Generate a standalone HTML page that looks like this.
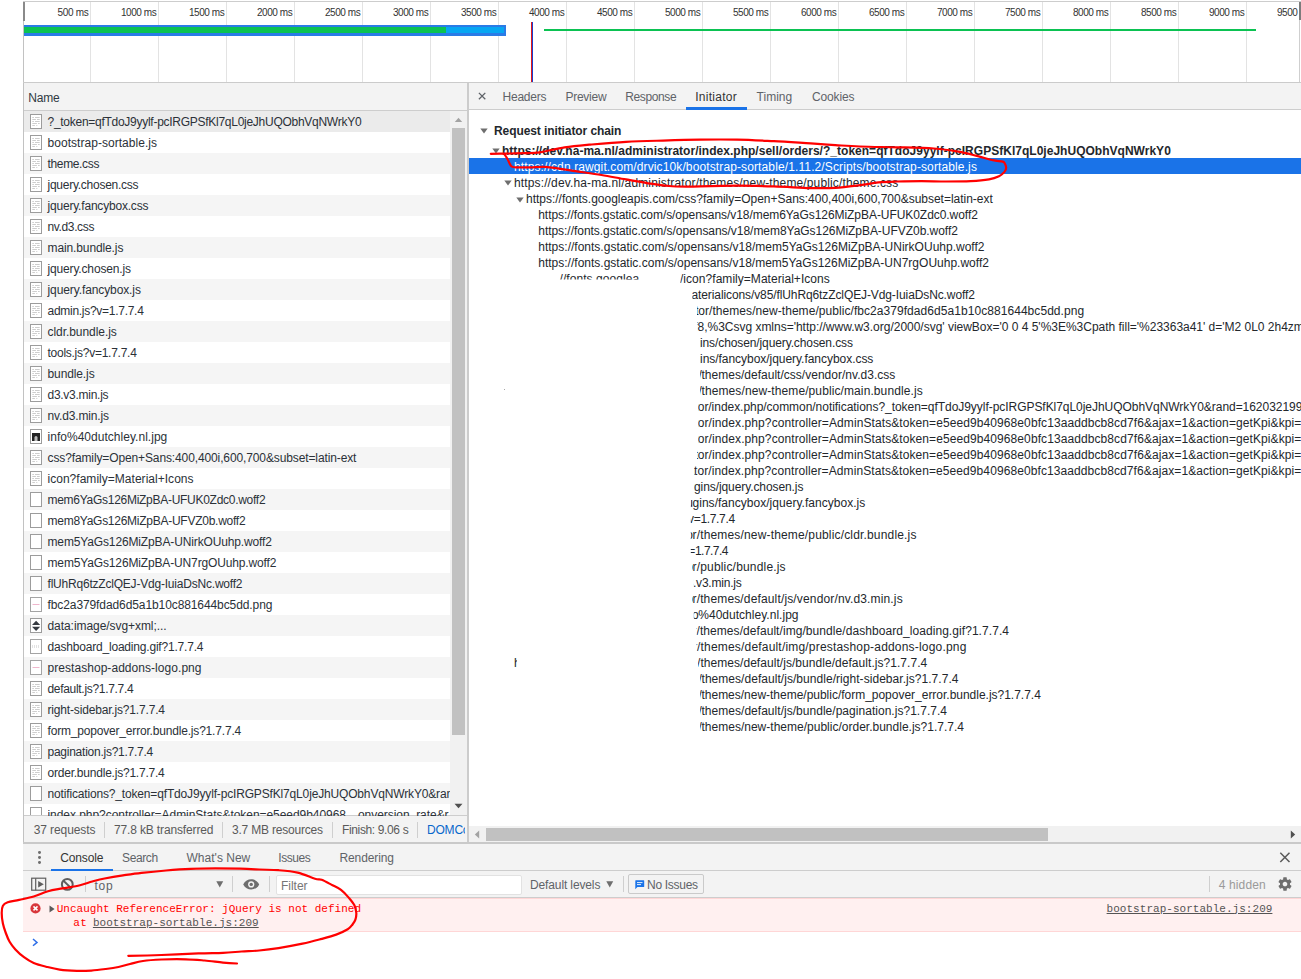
<!DOCTYPE html><html lang="en"><head><meta charset="utf-8"><title>DevTools - Network</title><style>
*{box-sizing:border-box}
html,body{margin:0;padding:0}
body{width:1301px;height:979px;position:relative;overflow:hidden;background:#fff;font-family:"Liberation Sans",sans-serif;font-size:12px;color:#303942}
.a{position:absolute}
.t{position:absolute;white-space:pre;line-height:16px;height:16px;font-size:12px}
.ov{font-size:10px;color:#333}
.hd{color:#303942}
.ln{color:#2b3138}
.sb{color:#5a5a5a}
.dom{color:#0867cb}
.tab{color:#5f6368}
.tab.sel{color:#333}
.tr{color:#23272c}
.b{font-weight:bold}
.w{color:#fff}
.dt{color:#5f6368}
.dt.sel{color:#333}
.ph{color:#757575}
.hid{color:#9a9a9a}
.mono{font-family:"Liberation Mono",monospace;font-size:11px}
.red{color:#ff0000}
.lnk{color:#545454;text-decoration:underline}
</style></head><body>
<div class="a" style="left:23px;top:1px;width:1278px;height:1px;background:#cdcdcd;"></div>
<div class="a" style="left:90px;top:2px;width:1px;height:80px;background:#e3e3e3;"></div>
<div class="a" style="left:158px;top:2px;width:1px;height:80px;background:#e3e3e3;"></div>
<div class="a" style="left:226px;top:2px;width:1px;height:80px;background:#e3e3e3;"></div>
<div class="a" style="left:294px;top:2px;width:1px;height:80px;background:#e3e3e3;"></div>
<div class="a" style="left:362px;top:2px;width:1px;height:80px;background:#e3e3e3;"></div>
<div class="a" style="left:430px;top:2px;width:1px;height:80px;background:#e3e3e3;"></div>
<div class="a" style="left:498px;top:2px;width:1px;height:80px;background:#e3e3e3;"></div>
<div class="a" style="left:566px;top:2px;width:1px;height:80px;background:#e3e3e3;"></div>
<div class="a" style="left:634px;top:2px;width:1px;height:80px;background:#e3e3e3;"></div>
<div class="a" style="left:702px;top:2px;width:1px;height:80px;background:#e3e3e3;"></div>
<div class="a" style="left:770px;top:2px;width:1px;height:80px;background:#e3e3e3;"></div>
<div class="a" style="left:838px;top:2px;width:1px;height:80px;background:#e3e3e3;"></div>
<div class="a" style="left:906px;top:2px;width:1px;height:80px;background:#e3e3e3;"></div>
<div class="a" style="left:974px;top:2px;width:1px;height:80px;background:#e3e3e3;"></div>
<div class="a" style="left:1042px;top:2px;width:1px;height:80px;background:#e3e3e3;"></div>
<div class="a" style="left:1110px;top:2px;width:1px;height:80px;background:#e3e3e3;"></div>
<div class="a" style="left:1178px;top:2px;width:1px;height:80px;background:#e3e3e3;"></div>
<div class="a" style="left:1246px;top:2px;width:1px;height:80px;background:#e3e3e3;"></div>
<div class="a" style="left:23px;top:2px;width:1px;height:841px;background:#c2c2c2;"></div>
<div class="a" style="left:23px;top:2px;width:2px;height:19px;background:#8a8a8a;"></div>
<div class="a" style="left:24px;top:25px;width:481.5px;height:10.8px;background:#2a7be6;"></div>
<div class="a" style="left:24px;top:27.3px;width:479.8px;height:5.6px;background:#06a6f2;"></div>
<div class="a" style="left:24px;top:27.3px;width:421.8px;height:5.6px;background:#0bc252;"></div>
<div class="a" style="left:544px;top:29px;width:712px;height:2px;background:#0bc252;"></div>
<div class="a" style="left:531px;top:22px;width:1px;height:60px;background:#e0181c;"></div>
<div class="a" style="left:532px;top:22px;width:1px;height:60px;background:#1a3fd0;"></div>
<div class="a" style="left:23px;top:82px;width:1278px;height:1px;background:#cbcbcb;"></div>
<div class="a" style="left:24px;top:83px;width:443px;height:27px;background:#f3f3f3;"></div>
<div class="a" style="left:24px;top:110px;width:443px;height:1px;background:#cdcdcd;"></div>
<div class="a" style="left:24px;top:111px;width:426px;height:704px;overflow:hidden">
<div class="a" style="left:0;top:0px;width:426px;height:21px;background:#ebebeb"></div>
<svg class="a" style="left:6px;top:2.7px" width="12" height="15" viewBox="0 0 12 15"><rect x="0.5" y="0.5" width="11" height="14" fill="#fff" stroke="#9c9c9c"/><path d="M2.3 3.5h1.6M5 3.5h4.7M2.3 5.5h3.6M7 5.5h2.7M2.3 7.5h1.6M5 7.5h4.7M2.3 9.5h4.6M8 9.5h1.7M2.3 11.5h2.6M6.3 11.5h1" stroke="#cdcdcd" stroke-width="1" fill="none"/></svg>
<div class="a" style="left:0;top:21px;width:426px;height:21px;background:#fff"></div>
<svg class="a" style="left:6px;top:23.7px" width="12" height="15" viewBox="0 0 12 15"><rect x="0.5" y="0.5" width="11" height="14" fill="#fff" stroke="#9c9c9c"/><path d="M2.3 3.5h1.6M5 3.5h4.7M2.3 5.5h3.6M7 5.5h2.7M2.3 7.5h1.6M5 7.5h4.7M2.3 9.5h4.6M8 9.5h1.7M2.3 11.5h2.6M6.3 11.5h1" stroke="#cdcdcd" stroke-width="1" fill="none"/></svg>
<div class="a" style="left:0;top:42px;width:426px;height:21px;background:#f5f5f5"></div>
<svg class="a" style="left:6px;top:44.7px" width="12" height="15" viewBox="0 0 12 15"><rect x="0.5" y="0.5" width="11" height="14" fill="#fff" stroke="#9c9c9c"/><path d="M2.3 3.5h1.6M5 3.5h4.7M2.3 5.5h3.6M7 5.5h2.7M2.3 7.5h1.6M5 7.5h4.7M2.3 9.5h4.6M8 9.5h1.7M2.3 11.5h2.6M6.3 11.5h1" stroke="#cdcdcd" stroke-width="1" fill="none"/></svg>
<div class="a" style="left:0;top:63px;width:426px;height:21px;background:#fff"></div>
<svg class="a" style="left:6px;top:65.7px" width="12" height="15" viewBox="0 0 12 15"><rect x="0.5" y="0.5" width="11" height="14" fill="#fff" stroke="#9c9c9c"/><path d="M2.3 3.5h1.6M5 3.5h4.7M2.3 5.5h3.6M7 5.5h2.7M2.3 7.5h1.6M5 7.5h4.7M2.3 9.5h4.6M8 9.5h1.7M2.3 11.5h2.6M6.3 11.5h1" stroke="#cdcdcd" stroke-width="1" fill="none"/></svg>
<div class="a" style="left:0;top:84px;width:426px;height:21px;background:#f5f5f5"></div>
<svg class="a" style="left:6px;top:86.7px" width="12" height="15" viewBox="0 0 12 15"><rect x="0.5" y="0.5" width="11" height="14" fill="#fff" stroke="#9c9c9c"/><path d="M2.3 3.5h1.6M5 3.5h4.7M2.3 5.5h3.6M7 5.5h2.7M2.3 7.5h1.6M5 7.5h4.7M2.3 9.5h4.6M8 9.5h1.7M2.3 11.5h2.6M6.3 11.5h1" stroke="#cdcdcd" stroke-width="1" fill="none"/></svg>
<div class="a" style="left:0;top:105px;width:426px;height:21px;background:#fff"></div>
<svg class="a" style="left:6px;top:107.7px" width="12" height="15" viewBox="0 0 12 15"><rect x="0.5" y="0.5" width="11" height="14" fill="#fff" stroke="#9c9c9c"/><path d="M2.3 3.5h1.6M5 3.5h4.7M2.3 5.5h3.6M7 5.5h2.7M2.3 7.5h1.6M5 7.5h4.7M2.3 9.5h4.6M8 9.5h1.7M2.3 11.5h2.6M6.3 11.5h1" stroke="#cdcdcd" stroke-width="1" fill="none"/></svg>
<div class="a" style="left:0;top:126px;width:426px;height:21px;background:#f5f5f5"></div>
<svg class="a" style="left:6px;top:128.7px" width="12" height="15" viewBox="0 0 12 15"><rect x="0.5" y="0.5" width="11" height="14" fill="#fff" stroke="#9c9c9c"/><path d="M2.3 3.5h1.6M5 3.5h4.7M2.3 5.5h3.6M7 5.5h2.7M2.3 7.5h1.6M5 7.5h4.7M2.3 9.5h4.6M8 9.5h1.7M2.3 11.5h2.6M6.3 11.5h1" stroke="#cdcdcd" stroke-width="1" fill="none"/></svg>
<div class="a" style="left:0;top:147px;width:426px;height:21px;background:#fff"></div>
<svg class="a" style="left:6px;top:149.7px" width="12" height="15" viewBox="0 0 12 15"><rect x="0.5" y="0.5" width="11" height="14" fill="#fff" stroke="#9c9c9c"/><path d="M2.3 3.5h1.6M5 3.5h4.7M2.3 5.5h3.6M7 5.5h2.7M2.3 7.5h1.6M5 7.5h4.7M2.3 9.5h4.6M8 9.5h1.7M2.3 11.5h2.6M6.3 11.5h1" stroke="#cdcdcd" stroke-width="1" fill="none"/></svg>
<div class="a" style="left:0;top:168px;width:426px;height:21px;background:#f5f5f5"></div>
<svg class="a" style="left:6px;top:170.7px" width="12" height="15" viewBox="0 0 12 15"><rect x="0.5" y="0.5" width="11" height="14" fill="#fff" stroke="#9c9c9c"/><path d="M2.3 3.5h1.6M5 3.5h4.7M2.3 5.5h3.6M7 5.5h2.7M2.3 7.5h1.6M5 7.5h4.7M2.3 9.5h4.6M8 9.5h1.7M2.3 11.5h2.6M6.3 11.5h1" stroke="#cdcdcd" stroke-width="1" fill="none"/></svg>
<div class="a" style="left:0;top:189px;width:426px;height:21px;background:#fff"></div>
<svg class="a" style="left:6px;top:191.7px" width="12" height="15" viewBox="0 0 12 15"><rect x="0.5" y="0.5" width="11" height="14" fill="#fff" stroke="#9c9c9c"/><path d="M2.3 3.5h1.6M5 3.5h4.7M2.3 5.5h3.6M7 5.5h2.7M2.3 7.5h1.6M5 7.5h4.7M2.3 9.5h4.6M8 9.5h1.7M2.3 11.5h2.6M6.3 11.5h1" stroke="#cdcdcd" stroke-width="1" fill="none"/></svg>
<div class="a" style="left:0;top:210px;width:426px;height:21px;background:#f5f5f5"></div>
<svg class="a" style="left:6px;top:212.7px" width="12" height="15" viewBox="0 0 12 15"><rect x="0.5" y="0.5" width="11" height="14" fill="#fff" stroke="#9c9c9c"/><path d="M2.3 3.5h1.6M5 3.5h4.7M2.3 5.5h3.6M7 5.5h2.7M2.3 7.5h1.6M5 7.5h4.7M2.3 9.5h4.6M8 9.5h1.7M2.3 11.5h2.6M6.3 11.5h1" stroke="#cdcdcd" stroke-width="1" fill="none"/></svg>
<div class="a" style="left:0;top:231px;width:426px;height:21px;background:#fff"></div>
<svg class="a" style="left:6px;top:233.7px" width="12" height="15" viewBox="0 0 12 15"><rect x="0.5" y="0.5" width="11" height="14" fill="#fff" stroke="#9c9c9c"/><path d="M2.3 3.5h1.6M5 3.5h4.7M2.3 5.5h3.6M7 5.5h2.7M2.3 7.5h1.6M5 7.5h4.7M2.3 9.5h4.6M8 9.5h1.7M2.3 11.5h2.6M6.3 11.5h1" stroke="#cdcdcd" stroke-width="1" fill="none"/></svg>
<div class="a" style="left:0;top:252px;width:426px;height:21px;background:#f5f5f5"></div>
<svg class="a" style="left:6px;top:254.7px" width="12" height="15" viewBox="0 0 12 15"><rect x="0.5" y="0.5" width="11" height="14" fill="#fff" stroke="#9c9c9c"/><path d="M2.3 3.5h1.6M5 3.5h4.7M2.3 5.5h3.6M7 5.5h2.7M2.3 7.5h1.6M5 7.5h4.7M2.3 9.5h4.6M8 9.5h1.7M2.3 11.5h2.6M6.3 11.5h1" stroke="#cdcdcd" stroke-width="1" fill="none"/></svg>
<div class="a" style="left:0;top:273px;width:426px;height:21px;background:#fff"></div>
<svg class="a" style="left:6px;top:275.7px" width="12" height="15" viewBox="0 0 12 15"><rect x="0.5" y="0.5" width="11" height="14" fill="#fff" stroke="#9c9c9c"/><path d="M2.3 3.5h1.6M5 3.5h4.7M2.3 5.5h3.6M7 5.5h2.7M2.3 7.5h1.6M5 7.5h4.7M2.3 9.5h4.6M8 9.5h1.7M2.3 11.5h2.6M6.3 11.5h1" stroke="#cdcdcd" stroke-width="1" fill="none"/></svg>
<div class="a" style="left:0;top:294px;width:426px;height:21px;background:#f5f5f5"></div>
<svg class="a" style="left:6px;top:296.7px" width="12" height="15" viewBox="0 0 12 15"><rect x="0.5" y="0.5" width="11" height="14" fill="#fff" stroke="#9c9c9c"/><path d="M2.3 3.5h1.6M5 3.5h4.7M2.3 5.5h3.6M7 5.5h2.7M2.3 7.5h1.6M5 7.5h4.7M2.3 9.5h4.6M8 9.5h1.7M2.3 11.5h2.6M6.3 11.5h1" stroke="#cdcdcd" stroke-width="1" fill="none"/></svg>
<div class="a" style="left:0;top:315px;width:426px;height:21px;background:#fff"></div>
<svg class="a" style="left:6px;top:317.7px" width="12" height="15" viewBox="0 0 12 15"><rect x="0.5" y="0.5" width="11" height="14" fill="#fff" stroke="#9c9c9c"/><rect x="2" y="4" width="8" height="8" fill="#222"/><path d="M4.5 12v-3.5a1.5 1.5 0 0 1 3 0V12z" fill="#bbb"/></svg>
<div class="a" style="left:0;top:336px;width:426px;height:21px;background:#f5f5f5"></div>
<svg class="a" style="left:6px;top:338.7px" width="12" height="15" viewBox="0 0 12 15"><rect x="0.5" y="0.5" width="11" height="14" fill="#fff" stroke="#9c9c9c"/><path d="M2.3 3.5h1.6M5 3.5h4.7M2.3 5.5h3.6M7 5.5h2.7M2.3 7.5h1.6M5 7.5h4.7M2.3 9.5h4.6M8 9.5h1.7M2.3 11.5h2.6M6.3 11.5h1" stroke="#cdcdcd" stroke-width="1" fill="none"/></svg>
<div class="a" style="left:0;top:357px;width:426px;height:21px;background:#fff"></div>
<svg class="a" style="left:6px;top:359.7px" width="12" height="15" viewBox="0 0 12 15"><rect x="0.5" y="0.5" width="11" height="14" fill="#fff" stroke="#9c9c9c"/><path d="M2.3 3.5h1.6M5 3.5h4.7M2.3 5.5h3.6M7 5.5h2.7M2.3 7.5h1.6M5 7.5h4.7M2.3 9.5h4.6M8 9.5h1.7M2.3 11.5h2.6M6.3 11.5h1" stroke="#cdcdcd" stroke-width="1" fill="none"/></svg>
<div class="a" style="left:0;top:378px;width:426px;height:21px;background:#f5f5f5"></div>
<svg class="a" style="left:6px;top:380.7px" width="12" height="15" viewBox="0 0 12 15"><rect x="0.5" y="0.5" width="11" height="14" fill="#fff" stroke="#9c9c9c"/></svg>
<div class="a" style="left:0;top:399px;width:426px;height:21px;background:#fff"></div>
<svg class="a" style="left:6px;top:401.7px" width="12" height="15" viewBox="0 0 12 15"><rect x="0.5" y="0.5" width="11" height="14" fill="#fff" stroke="#9c9c9c"/></svg>
<div class="a" style="left:0;top:420px;width:426px;height:21px;background:#f5f5f5"></div>
<svg class="a" style="left:6px;top:422.7px" width="12" height="15" viewBox="0 0 12 15"><rect x="0.5" y="0.5" width="11" height="14" fill="#fff" stroke="#9c9c9c"/></svg>
<div class="a" style="left:0;top:441px;width:426px;height:21px;background:#fff"></div>
<svg class="a" style="left:6px;top:443.7px" width="12" height="15" viewBox="0 0 12 15"><rect x="0.5" y="0.5" width="11" height="14" fill="#fff" stroke="#9c9c9c"/></svg>
<div class="a" style="left:0;top:462px;width:426px;height:21px;background:#f5f5f5"></div>
<svg class="a" style="left:6px;top:464.7px" width="12" height="15" viewBox="0 0 12 15"><rect x="0.5" y="0.5" width="11" height="14" fill="#fff" stroke="#9c9c9c"/></svg>
<div class="a" style="left:0;top:483px;width:426px;height:21px;background:#fff"></div>
<svg class="a" style="left:6px;top:485.7px" width="12" height="15" viewBox="0 0 12 15"><rect x="0.5" y="0.5" width="11" height="14" fill="#fff" stroke="#a4a4a4"/><path d="M2.5 7.5h7" stroke="#efb6cc" stroke-width="1"/></svg>
<div class="a" style="left:0;top:504px;width:426px;height:21px;background:#f5f5f5"></div>
<svg class="a" style="left:6px;top:506.7px" width="12" height="15" viewBox="0 0 12 15"><rect x="0.5" y="0.5" width="11" height="14" fill="#fff" stroke="#9c9c9c"/><path d="M2 7L6.1 2.8L10.2 7zM2 8.8L6.1 13L10.2 8.8z" fill="#363a41"/></svg>
<div class="a" style="left:0;top:525px;width:426px;height:21px;background:#fff"></div>
<svg class="a" style="left:6px;top:527.7px" width="12" height="15" viewBox="0 0 12 15"><rect x="0.5" y="0.5" width="11" height="14" fill="#fff" stroke="#a4a4a4"/><path d="M2.5 6v3M4.5 6v3M6.5 6v3M8.5 6v3" stroke="#e2e2e2" stroke-width="1"/></svg>
<div class="a" style="left:0;top:546px;width:426px;height:21px;background:#f5f5f5"></div>
<svg class="a" style="left:6px;top:548.7px" width="12" height="15" viewBox="0 0 12 15"><rect x="0.5" y="0.5" width="11" height="14" fill="#fff" stroke="#a4a4a4"/><path d="M2.5 7.5h7" stroke="#efb6cc" stroke-width="1"/></svg>
<div class="a" style="left:0;top:567px;width:426px;height:21px;background:#fff"></div>
<svg class="a" style="left:6px;top:569.7px" width="12" height="15" viewBox="0 0 12 15"><rect x="0.5" y="0.5" width="11" height="14" fill="#fff" stroke="#9c9c9c"/><path d="M2.3 3.5h1.6M5 3.5h4.7M2.3 5.5h3.6M7 5.5h2.7M2.3 7.5h1.6M5 7.5h4.7M2.3 9.5h4.6M8 9.5h1.7M2.3 11.5h2.6M6.3 11.5h1" stroke="#cdcdcd" stroke-width="1" fill="none"/></svg>
<div class="a" style="left:0;top:588px;width:426px;height:21px;background:#f5f5f5"></div>
<svg class="a" style="left:6px;top:590.7px" width="12" height="15" viewBox="0 0 12 15"><rect x="0.5" y="0.5" width="11" height="14" fill="#fff" stroke="#9c9c9c"/><path d="M2.3 3.5h1.6M5 3.5h4.7M2.3 5.5h3.6M7 5.5h2.7M2.3 7.5h1.6M5 7.5h4.7M2.3 9.5h4.6M8 9.5h1.7M2.3 11.5h2.6M6.3 11.5h1" stroke="#cdcdcd" stroke-width="1" fill="none"/></svg>
<div class="a" style="left:0;top:609px;width:426px;height:21px;background:#fff"></div>
<svg class="a" style="left:6px;top:611.7px" width="12" height="15" viewBox="0 0 12 15"><rect x="0.5" y="0.5" width="11" height="14" fill="#fff" stroke="#9c9c9c"/><path d="M2.3 3.5h1.6M5 3.5h4.7M2.3 5.5h3.6M7 5.5h2.7M2.3 7.5h1.6M5 7.5h4.7M2.3 9.5h4.6M8 9.5h1.7M2.3 11.5h2.6M6.3 11.5h1" stroke="#cdcdcd" stroke-width="1" fill="none"/></svg>
<div class="a" style="left:0;top:630px;width:426px;height:21px;background:#f5f5f5"></div>
<svg class="a" style="left:6px;top:632.7px" width="12" height="15" viewBox="0 0 12 15"><rect x="0.5" y="0.5" width="11" height="14" fill="#fff" stroke="#9c9c9c"/><path d="M2.3 3.5h1.6M5 3.5h4.7M2.3 5.5h3.6M7 5.5h2.7M2.3 7.5h1.6M5 7.5h4.7M2.3 9.5h4.6M8 9.5h1.7M2.3 11.5h2.6M6.3 11.5h1" stroke="#cdcdcd" stroke-width="1" fill="none"/></svg>
<div class="a" style="left:0;top:651px;width:426px;height:21px;background:#fff"></div>
<svg class="a" style="left:6px;top:653.7px" width="12" height="15" viewBox="0 0 12 15"><rect x="0.5" y="0.5" width="11" height="14" fill="#fff" stroke="#9c9c9c"/><path d="M2.3 3.5h1.6M5 3.5h4.7M2.3 5.5h3.6M7 5.5h2.7M2.3 7.5h1.6M5 7.5h4.7M2.3 9.5h4.6M8 9.5h1.7M2.3 11.5h2.6M6.3 11.5h1" stroke="#cdcdcd" stroke-width="1" fill="none"/></svg>
<div class="a" style="left:0;top:672px;width:426px;height:21px;background:#f5f5f5"></div>
<svg class="a" style="left:6px;top:674.7px" width="12" height="15" viewBox="0 0 12 15"><rect x="0.5" y="0.5" width="11" height="14" fill="#fff" stroke="#9c9c9c"/></svg>
<div class="a" style="left:0;top:693px;width:426px;height:21px;background:#fff"></div>
<svg class="a" style="left:6px;top:695.7px" width="12" height="15" viewBox="0 0 12 15"><rect x="0.5" y="0.5" width="11" height="14" fill="#fff" stroke="#9c9c9c"/></svg>
</div>
<div class="a" style="left:450px;top:111px;width:17px;height:704px;background:#f1f1f1;"></div>
<div class="a" style="left:452px;top:128px;width:13px;height:607px;background:#c1c1c1;"></div>
<svg class="a" style="left:454px;top:117px" width="9" height="6" viewBox="0 0 9 6"><path d="M0.8 5L4.5 0.8L8.2 5z" fill="#a3a3a3"/></svg>
<svg class="a" style="left:454px;top:803px" width="9" height="6" viewBox="0 0 9 6"><path d="M0.5 0.8L4.5 5.2L8.5 0.8z" fill="#505050"/></svg>
<div class="a" style="left:24px;top:815px;width:443px;height:1px;background:#cdcdcd;"></div>
<div class="a" style="left:24px;top:816px;width:443px;height:27px;background:#f3f3f3;"></div>
<div class="a" style="left:104px;top:822px;width:1px;height:16px;background:#cfcfcf;"></div>
<div class="a" style="left:222px;top:822px;width:1px;height:16px;background:#cfcfcf;"></div>
<div class="a" style="left:332px;top:822px;width:1px;height:16px;background:#cfcfcf;"></div>
<div class="a" style="left:417px;top:822px;width:1px;height:16px;background:#cfcfcf;"></div>
<div class="a" style="left:467px;top:83px;width:2px;height:760px;background:#cccccc;"></div>
<div class="a" style="left:469px;top:83px;width:832px;height:26px;background:#f3f3f3;"></div>
<div class="a" style="left:469px;top:109px;width:832px;height:1px;background:#cdcdcd;"></div>
<div class="a" style="left:686px;top:107px;width:61px;height:2.5px;background:#1a73e8;"></div>
<svg class="a" style="left:477px;top:91px" width="10" height="10" viewBox="0 0 10 10"><path d="M1.9 1.9L8.3 8.3M8.3 1.9L1.9 8.3" stroke="#5f6368" stroke-width="1.3" fill="none"/></svg>
<div class="a" style="left:469px;top:158px;width:832px;height:16px;background:#1a73e8;"></div>
<svg class="a" style="left:480px;top:128px" width="8" height="6" viewBox="0 0 8 6"><path d="M0.3 0.4L7.7 0.4L4 5.6z" fill="#6e6e6e"/></svg>
<svg class="a" style="left:492px;top:148px" width="8" height="6" viewBox="0 0 8 6"><path d="M0.3 0.4L7.7 0.4L4 5.6z" fill="#6e6e6e"/></svg>
<svg class="a" style="left:503.5px;top:180px" width="8" height="6" viewBox="0 0 8 6"><path d="M0.3 0.4L7.7 0.4L4 5.6z" fill="#6e6e6e"/></svg>
<svg class="a" style="left:516px;top:196.5px" width="8" height="6" viewBox="0 0 8 6"><path d="M0.3 0.4L7.7 0.4L4 5.6z" fill="#6e6e6e"/></svg>
<div class="a" style="left:469px;top:826px;width:832px;height:17px;background:#f1f1f1;"></div>
<div class="a" style="left:486px;top:828px;width:562px;height:12.5px;background:#c1c1c1;"></div>
<svg class="a" style="left:474px;top:830px" width="6" height="9" viewBox="0 0 6 9"><path d="M5.2 0.5L5.2 8.5L0.8 4.5z" fill="#a3a3a3"/></svg>
<svg class="a" style="left:1290px;top:830px" width="6" height="9" viewBox="0 0 6 9"><path d="M0.8 0.5L0.8 8.5L5.2 4.5z" fill="#505050"/></svg>
<div class="a" style="left:23px;top:842.3px;width:1278px;height:1.7px;background:#c9c9c9;"></div>
<div class="a" style="left:23px;top:844px;width:1278px;height:26px;background:#f3f3f3;"></div>
<div class="a" style="left:23px;top:870px;width:1278px;height:1px;background:#cdcdcd;"></div>
<div class="a" style="left:23px;top:871px;width:1278px;height:26px;background:#f3f3f3;"></div>
<div class="a" style="left:23px;top:897px;width:1278px;height:1px;background:#cdcdcd;"></div>
<div class="a" style="left:51px;top:868.7px;width:62px;height:2.3px;background:#1a73e8;"></div>
<div class="a" style="left:37.95px;top:850.85px;width:2.9px;height:2.9px;background:#6e6e6e;border-radius:50%"></div>
<div class="a" style="left:37.95px;top:856.05px;width:2.9px;height:2.9px;background:#6e6e6e;border-radius:50%"></div>
<div class="a" style="left:37.95px;top:861.15px;width:2.9px;height:2.9px;background:#6e6e6e;border-radius:50%"></div>
<svg class="a" style="left:1279px;top:852px" width="12" height="11" viewBox="0 0 12 11"><path d="M1.3 0.8L10.5 10M10.5 0.8L1.3 10" stroke="#5a5a5a" stroke-width="1.5" fill="none"/></svg>
<svg class="a" style="left:31px;top:877px" width="16" height="15" viewBox="0 0 16 15"><rect x="0.7" y="1.2" width="14" height="12" fill="none" stroke="#5e5e5e" stroke-width="1.2"/><path d="M4.7 1.2v12" stroke="#5e5e5e" stroke-width="1.2"/><path d="M7.2 4L12.8 7.2L7.2 10.4z" fill="#5e5e5e"/></svg>
<svg class="a" style="left:60px;top:877px" width="15" height="15" viewBox="0 0 15 15"><circle cx="7.3" cy="7.4" r="5.4" fill="none" stroke="#5e5e5e" stroke-width="2"/><path d="M3.4 3.6L11.2 11.2" stroke="#5e5e5e" stroke-width="2"/></svg>
<div class="a" style="left:85px;top:876px;width:1px;height:16px;background:#cfcfcf;"></div>
<svg class="a" style="left:216px;top:881px" width="8" height="7" viewBox="0 0 8 7"><path d="M0.3 0.3L7.2 0.3L3.75 6.6z" fill="#6e6e6e"/></svg>
<div class="a" style="left:232px;top:876px;width:1px;height:16px;background:#cfcfcf;"></div>
<svg class="a" style="left:243px;top:879px" width="17" height="11" viewBox="0 0 17 11"><path d="M0.2 5.4C2 1.9 5 0.3 8.2 0.3S14.4 1.9 16.2 5.4C14.4 8.9 11.4 10.5 8.2 10.5S2 8.9 0.2 5.4z" fill="#6e6e6e"/><circle cx="8.2" cy="5.4" r="3.1" fill="#f3f3f3"/><circle cx="8.2" cy="5.4" r="1.7" fill="#6e6e6e"/></svg>
<div class="a" style="left:269px;top:876px;width:1px;height:16px;background:#cfcfcf;"></div>
<div class="a" style="left:276px;top:874.5px;width:245.5px;height:20px;background:#fff;border:1px solid #e2e2e2;border-radius:2px"></div>
<svg class="a" style="left:606px;top:881px" width="8" height="7" viewBox="0 0 8 7"><path d="M0.3 0.3L7.2 0.3L3.75 6.6z" fill="#6e6e6e"/></svg>
<div class="a" style="left:623px;top:876px;width:1px;height:16px;background:#cfcfcf;"></div>
<div class="a" style="left:628px;top:874px;width:76px;height:20px;background:#f3f3f3;border:1px solid #cacaca;border-radius:2px"></div>
<svg class="a" style="left:635px;top:880px" width="10" height="10" viewBox="0 0 10 10"><path d="M0.3 0.8Q0.3 0.3 0.8 0.3H8.7Q9.2 0.3 9.2 0.8V6.6Q9.2 7.1 8.7 7.1H2.4L0.3 9.2z" fill="#1a73e8"/><path d="M2 2.6h5.5M2 4.6h4" stroke="#fff" stroke-width="0.9"/></svg>
<div class="a" style="left:1209px;top:876px;width:1px;height:16px;background:#cfcfcf;"></div>
<svg class="a" style="left:1276.6px;top:876px" width="16" height="16" viewBox="0 0 24 24"><path fill="#6e6e6e" d="M19.43 12.98c.04-.32.07-.64.07-.98s-.03-.66-.07-.98l2.11-1.65c.19-.15.24-.42.12-.64l-2-3.46c-.12-.22-.39-.3-.61-.22l-2.49 1c-.52-.4-1.08-.73-1.69-.98l-.38-2.65C14.46 2.18 14.25 2 14 2h-4c-.25 0-.46.18-.49.42l-.38 2.65c-.61.25-1.17.59-1.69.98l-2.49-1c-.23-.09-.49 0-.61.22l-2 3.46c-.13.22-.07.49.12.64l2.11 1.65c-.04.32-.07.65-.07.98s.03.66.07.98l-2.11 1.65c-.19.15-.24.42-.12.64l2 3.46c.12.22.39.3.61.22l2.49-1c.52.4 1.08.73 1.69.98l.38 2.65c.03.24.24.42.49.42h4c.25 0 .46-.18.49-.42l.38-2.65c.61-.25 1.17-.59 1.69-.98l2.49 1c.23.09.49 0 .61-.22l2-3.46c.12-.22.07-.49-.12-.64l-2.11-1.65zM12 15.5c-1.93 0-3.500-1.570-3.500-3.500s1.570-3.500 3.500-3.500 3.500 1.570 3.500 3.500-1.570 3.500-3.500 3.500z"/></svg>
<div class="a" style="left:23px;top:898px;width:1278px;height:33px;background:#fff0f0;"></div>
<div class="a" style="left:23px;top:897.5px;width:1278px;height:1px;background:#ffd6d6;"></div>
<div class="a" style="left:23px;top:931px;width:1278px;height:1px;background:#ffd6d6;"></div>
<svg class="a" style="left:29.5px;top:903px" width="11" height="11" viewBox="0 0 11 11"><circle cx="5.5" cy="5.4" r="5.1" fill="#d8363b"/><path d="M3.5 3.4L7.5 7.4M7.5 3.4L3.5 7.4" stroke="#fff" stroke-width="1.5"/></svg>
<svg class="a" style="left:48.6px;top:904.8px" width="6" height="8" viewBox="0 0 6 8"><path d="M0.5 0.4L5.6 4L0.5 7.6z" fill="#5a5a5a"/></svg>
<svg class="a" style="left:32px;top:938px" width="7" height="9" viewBox="0 0 7 9"><path d="M1 1L5 4.4L1 7.8" stroke="#2f6fe8" stroke-width="1.5" fill="none"/></svg>
<span class="t ov" style="left:57.50px;top:5.10px;letter-spacing:-0.333px;">500 ms</span>
<span class="t ov" style="left:120.90px;top:5.10px;letter-spacing:-0.423px;">1000 ms</span>
<span class="t ov" style="left:188.90px;top:5.10px;letter-spacing:-0.423px;">1500 ms</span>
<span class="t ov" style="left:256.90px;top:5.10px;letter-spacing:-0.423px;">2000 ms</span>
<span class="t ov" style="left:324.90px;top:5.10px;letter-spacing:-0.423px;">2500 ms</span>
<span class="t ov" style="left:392.90px;top:5.10px;letter-spacing:-0.423px;">3000 ms</span>
<span class="t ov" style="left:460.90px;top:5.10px;letter-spacing:-0.423px;">3500 ms</span>
<span class="t ov" style="left:528.90px;top:5.10px;letter-spacing:-0.423px;">4000 ms</span>
<span class="t ov" style="left:596.90px;top:5.10px;letter-spacing:-0.423px;">4500 ms</span>
<span class="t ov" style="left:664.90px;top:5.10px;letter-spacing:-0.423px;">5000 ms</span>
<span class="t ov" style="left:732.90px;top:5.10px;letter-spacing:-0.423px;">5500 ms</span>
<span class="t ov" style="left:800.90px;top:5.10px;letter-spacing:-0.423px;">6000 ms</span>
<span class="t ov" style="left:868.90px;top:5.10px;letter-spacing:-0.423px;">6500 ms</span>
<span class="t ov" style="left:936.90px;top:5.10px;letter-spacing:-0.423px;">7000 ms</span>
<span class="t ov" style="left:1004.90px;top:5.10px;letter-spacing:-0.423px;">7500 ms</span>
<span class="t ov" style="left:1072.90px;top:5.10px;letter-spacing:-0.423px;">8000 ms</span>
<span class="t ov" style="left:1140.90px;top:5.10px;letter-spacing:-0.423px;">8500 ms</span>
<span class="t ov" style="left:1208.90px;top:5.10px;letter-spacing:-0.423px;">9000 ms</span>
<span class="t ov" style="left:1276.90px;top:5.10px;letter-spacing:-0.423px;">9500 ms</span>
<span class="t hd" style="left:28.25px;top:89.50px;letter-spacing:-0.179px;">Name</span>
<span class="t ln" style="left:47.50px;top:113.50px;letter-spacing:-0.271px;">?_token=qfTdoJ9yylf-pcIRGPSfKl7qL0jeJhUQObhVqNWrkY0</span>
<span class="t ln" style="left:47.50px;top:134.50px;letter-spacing:0.039px;">bootstrap-sortable.js</span>
<span class="t ln" style="left:47.50px;top:155.50px;letter-spacing:-0.349px;">theme.css</span>
<span class="t ln" style="left:47.50px;top:176.50px;letter-spacing:-0.256px;">jquery.chosen.css</span>
<span class="t ln" style="left:47.50px;top:197.50px;letter-spacing:-0.195px;">jquery.fancybox.css</span>
<span class="t ln" style="left:47.50px;top:218.50px;letter-spacing:-0.363px;">nv.d3.css</span>
<span class="t ln" style="left:47.50px;top:239.50px;letter-spacing:-0.114px;">main.bundle.js</span>
<span class="t ln" style="left:47.50px;top:260.50px;letter-spacing:-0.158px;">jquery.chosen.js</span>
<span class="t ln" style="left:47.50px;top:281.50px;letter-spacing:-0.103px;">jquery.fancybox.js</span>
<span class="t ln" style="left:47.50px;top:302.50px;letter-spacing:-0.278px;">admin.js?v=1.7.7.4</span>
<span class="t ln" style="left:47.50px;top:323.50px;letter-spacing:-0.053px;">cldr.bundle.js</span>
<span class="t ln" style="left:47.50px;top:344.50px;letter-spacing:-0.260px;">tools.js?v=1.7.7.4</span>
<span class="t ln" style="left:47.50px;top:365.50px;letter-spacing:-0.111px;">bundle.js</span>
<span class="t ln" style="left:47.50px;top:386.50px;letter-spacing:-0.269px;">d3.v3.min.js</span>
<span class="t ln" style="left:47.50px;top:407.50px;letter-spacing:-0.153px;">nv.d3.min.js</span>
<span class="t ln" style="left:47.50px;top:428.50px;letter-spacing:0.027px;">info%40dutchley.nl.jpg</span>
<span class="t ln" style="left:47.50px;top:449.50px;letter-spacing:-0.119px;">css?family=Open+Sans:400,400i,600,700&amp;subset=latin-ext</span>
<span class="t ln" style="left:47.50px;top:470.50px;letter-spacing:0.025px;">icon?family=Material+Icons</span>
<span class="t ln" style="left:47.50px;top:491.50px;letter-spacing:-0.278px;">mem6YaGs126MiZpBA-UFUK0Zdc0.woff2</span>
<span class="t ln" style="left:47.50px;top:512.50px;letter-spacing:-0.261px;">mem8YaGs126MiZpBA-UFVZ0b.woff2</span>
<span class="t ln" style="left:47.50px;top:533.50px;letter-spacing:-0.137px;">mem5YaGs126MiZpBA-UNirkOUuhp.woff2</span>
<span class="t ln" style="left:47.50px;top:554.50px;letter-spacing:-0.143px;">mem5YaGs126MiZpBA-UN7rgOUuhp.woff2</span>
<span class="t ln" style="left:47.50px;top:575.50px;letter-spacing:-0.207px;">flUhRq6tzZclQEJ-Vdg-IuiaDsNc.woff2</span>
<span class="t ln" style="left:47.50px;top:596.50px;letter-spacing:-0.095px;">fbc2a379fdad6d5a1b10c881644bc5dd.png</span>
<span class="t ln" style="left:47.50px;top:617.50px;letter-spacing:-0.061px;">data:image/svg+xml;...</span>
<span class="t ln" style="left:47.50px;top:638.50px;letter-spacing:-0.195px;">dashboard_loading.gif?1.7.7.4</span>
<span class="t ln" style="left:47.50px;top:659.50px;letter-spacing:0.049px;">prestashop-addons-logo.png</span>
<span class="t ln" style="left:47.50px;top:680.50px;letter-spacing:-0.311px;">default.js?1.7.7.4</span>
<span class="t ln" style="left:47.50px;top:701.50px;letter-spacing:-0.171px;">right-sidebar.js?1.7.7.4</span>
<span class="t ln" style="left:47.50px;top:722.50px;letter-spacing:-0.183px;">form_popover_error.bundle.js?1.7.7.4</span>
<span class="t ln" style="left:47.50px;top:743.50px;letter-spacing:-0.248px;">pagination.js?1.7.7.4</span>
<span class="t ln" style="left:47.50px;top:764.50px;letter-spacing:-0.219px;">order.bundle.js?1.7.7.4</span>
<span class="t ln" style="left:47.50px;top:785.50px;letter-spacing:-0.160px;width:403.5px;overflow:hidden;">notifications?_token=qfTdoJ9yylf-pcIRGPSfKl7qL0jeJhUQObhVqNWrkY0&amp;rand=1620321990</span>
<span class="t ln" style="left:47.50px;top:806.50px;letter-spacing:-0.048px;width:403.5px;height:9px;overflow:hidden;">index.php?controller=AdminStats&amp;token=e5eed9b40968…onversion_rate&amp;r</span>
<span class="t sb" style="left:33.75px;top:821.50px;letter-spacing:-0.106px;">37 requests</span>
<span class="t sb" style="left:114.00px;top:821.50px;letter-spacing:-0.145px;">77.8 kB transferred</span>
<span class="t sb" style="left:232.00px;top:821.50px;letter-spacing:-0.203px;">3.7 MB resources</span>
<span class="t sb" style="left:342.00px;top:821.50px;letter-spacing:-0.363px;">Finish: 9.06 s</span>
<span class="t sb dom" style="left:427.00px;top:821.50px;letter-spacing:-0.200px;width:38px;overflow:hidden;">DOMContentLoaded: 3.86 s</span>
<span class="t tab" style="left:502.50px;top:88.80px;letter-spacing:-0.223px;">Headers</span>
<span class="t tab" style="left:565.50px;top:88.80px;letter-spacing:-0.270px;">Preview</span>
<span class="t tab" style="left:625.25px;top:88.80px;letter-spacing:-0.375px;">Response</span>
<span class="t tab sel" style="left:695.25px;top:88.80px;letter-spacing:0.271px;">Initiator</span>
<span class="t tab" style="left:756.50px;top:88.80px;letter-spacing:0.040px;">Timing</span>
<span class="t tab" style="left:812.00px;top:88.80px;letter-spacing:-0.151px;">Cookies</span>
<span class="t tr b" style="left:494.00px;top:123.45px;letter-spacing:-0.090px;">Request initiator chain</span>
<span class="t tr b" style="left:502.00px;top:143.45px;letter-spacing:0.020px;">https://dev.ha-ma.nl/administrator/index.php/sell/orders/?_token=qfTdoJ9yylf-pcIRGPSfKl7qL0jeJhUQObhVqNWrkY0</span>
<span class="t tr w" style="left:514.00px;top:159.45px;letter-spacing:0.119px;">https://cdn.rawgit.com/drvic10k/bootstrap-sortable/1.11.2/Scripts/bootstrap-sortable.js</span>
<span class="t tr" style="left:514.00px;top:175.45px;letter-spacing:0.133px;">https://dev.ha-ma.nl/administrator/themes/new-theme/public/theme.css</span>
<span class="t tr" style="left:526.00px;top:191.45px;letter-spacing:-0.014px;">https://fonts.googleapis.com/css?family=Open+Sans:400,400i,600,700&amp;subset=latin-ext</span>
<span class="t tr" style="left:538.25px;top:207.45px;letter-spacing:-0.057px;">https://fonts.gstatic.com/s/opensans/v18/mem6YaGs126MiZpBA-UFUK0Zdc0.woff2</span>
<span class="t tr" style="left:538.25px;top:223.45px;letter-spacing:-0.040px;">https://fonts.gstatic.com/s/opensans/v18/mem8YaGs126MiZpBA-UFVZ0b.woff2</span>
<span class="t tr" style="left:538.25px;top:239.45px;letter-spacing:0.007px;">https://fonts.gstatic.com/s/opensans/v18/mem5YaGs126MiZpBA-UNirkOUuhp.woff2</span>
<span class="t tr" style="left:538.25px;top:255.45px;letter-spacing:0.003px;">https://fonts.gstatic.com/s/opensans/v18/mem5YaGs126MiZpBA-UN7rgOUuhp.woff2</span>
<span class="t tr" style="left:680.00px;top:271.45px;letter-spacing:0.039px;">/icon?family=Material+Icons</span>
<span class="t tr" style="left:691.50px;top:287.45px;letter-spacing:-0.103px;">aterialicons/v85/flUhRq6tzZclQEJ-Vdg-IuiaDsNc.woff2</span>
<span class="t tr" style="left:698.25px;top:303.45px;letter-spacing:0.058px;">or/themes/new-theme/public/fbc2a379fdad6d5a1b10c881644bc5dd.png</span>
<span class="t tr" style="left:697.50px;top:319.45px;letter-spacing:-0.014px;">8,%3Csvg xmlns='http://www.w3.org/2000/svg' viewBox='0 0 4 5'%3E%3Cpath fill='%23363a41' d='M2 0L0 2h4zm</span>
<span class="t tr" style="left:700.00px;top:335.45px;letter-spacing:-0.109px;">ins/chosen/jquery.chosen.css</span>
<span class="t tr" style="left:700.00px;top:351.45px;letter-spacing:-0.038px;">ins/fancybox/jquery.fancybox.css</span>
<span class="t tr" style="left:701.50px;top:367.45px;letter-spacing:0.017px;">themes/default/css/vendor/nv.d3.css</span>
<span class="t tr" style="left:701.50px;top:383.45px;letter-spacing:0.101px;">themes/new-theme/public/main.bundle.js</span>
<span class="t tr" style="left:697.75px;top:399.45px;letter-spacing:-0.043px;">or/index.php/common/notifications?_token=qfTdoJ9yylf-pcIRGPSfKl7qL0jeJhUQObhVqNWrkY0&amp;rand=162032199</span>
<span class="t tr" style="left:697.75px;top:415.45px;letter-spacing:0.089px;">or/index.php?controller=AdminStats&amp;token=e5eed9b40968e0bfc13aaddbcb8cd7f6&amp;ajax=1&amp;action=getKpi&amp;kpi=</span>
<span class="t tr" style="left:697.75px;top:431.45px;letter-spacing:0.089px;">or/index.php?controller=AdminStats&amp;token=e5eed9b40968e0bfc13aaddbcb8cd7f6&amp;ajax=1&amp;action=getKpi&amp;kpi=</span>
<span class="t tr" style="left:697.75px;top:447.45px;letter-spacing:0.089px;">or/index.php?controller=AdminStats&amp;token=e5eed9b40968e0bfc13aaddbcb8cd7f6&amp;ajax=1&amp;action=getKpi&amp;kpi=</span>
<span class="t tr" style="left:694.00px;top:463.45px;letter-spacing:0.092px;">tor/index.php?controller=AdminStats&amp;token=e5eed9b40968e0bfc13aaddbcb8cd7f6&amp;ajax=1&amp;action=getKpi&amp;kpi=</span>
<span class="t tr" style="left:694.00px;top:479.45px;letter-spacing:-0.089px;">gins/jquery.chosen.js</span>
<span class="t tr" style="left:692.50px;top:495.45px;letter-spacing:0.029px;">gins/fancybox/jquery.fancybox.js</span>
<span class="t tr" style="left:693.75px;top:511.45px;letter-spacing:-0.334px;">=1.7.7.4</span>
<span class="t tr" style="left:692.50px;top:527.45px;letter-spacing:0.165px;">r/themes/new-theme/public/cldr.bundle.js</span>
<span class="t tr" style="left:695.00px;top:543.45px;letter-spacing:-0.558px;">1.7.7.4</span>
<span class="t tr" style="left:692.50px;top:559.45px;letter-spacing:0.180px;">r/public/bundle.js</span>
<span class="t tr" style="left:693.00px;top:575.45px;letter-spacing:-0.214px;">.v3.min.js</span>
<span class="t tr" style="left:692.50px;top:591.45px;letter-spacing:0.148px;">r/themes/default/js/vendor/nv.d3.min.js</span>
<span class="t tr" style="left:698.25px;top:607.45px;letter-spacing:0.025px;">%40dutchley.nl.jpg</span>
<span class="t tr" style="left:696.50px;top:623.45px;letter-spacing:0.065px;">/themes/default/img/bundle/dashboard_loading.gif?1.7.7.4</span>
<span class="t tr" style="left:697.00px;top:639.45px;letter-spacing:0.189px;">/themes/default/img/prestashop-addons-logo.png</span>
<span class="t tr" style="left:697.00px;top:655.45px;letter-spacing:0.049px;">/themes/default/js/bundle/default.js?1.7.7.4</span>
<span class="t tr" style="left:701.50px;top:671.45px;letter-spacing:0.045px;">themes/default/js/bundle/right-sidebar.js?1.7.7.4</span>
<span class="t tr" style="left:701.50px;top:687.45px;letter-spacing:-0.015px;">themes/new-theme/public/form_popover_error.bundle.js?1.7.7.4</span>
<span class="t tr" style="left:701.50px;top:703.45px;letter-spacing:0.030px;">themes/default/js/bundle/pagination.js?1.7.7.4</span>
<span class="t tr" style="left:701.50px;top:719.45px;letter-spacing:0.008px;">themes/new-theme/public/order.bundle.js?1.7.7.4</span>
<span class="t tr" style="left:559.50px;top:271.45px;letter-spacing:0.071px;">//fonts.googlea</span>
<span class="t dt sel" style="left:60.25px;top:849.50px;letter-spacing:-0.140px;">Console</span>
<span class="t dt" style="left:122.00px;top:849.50px;letter-spacing:-0.372px;">Search</span>
<span class="t dt" style="left:186.50px;top:849.50px;letter-spacing:0.016px;">What's New</span>
<span class="t dt" style="left:278.25px;top:849.50px;letter-spacing:-0.440px;">Issues</span>
<span class="t dt" style="left:339.50px;top:849.50px;letter-spacing:-0.119px;">Rendering</span>
<span class="t dt" style="left:94.50px;top:878.00px;letter-spacing:0.704px;">top</span>
<span class="t ph" style="left:281.00px;top:877.80px;letter-spacing:-0.029px;">Filter</span>
<span class="t dt" style="left:530.00px;top:876.50px;letter-spacing:-0.125px;">Default levels</span>
<span class="t dt" style="left:647.00px;top:876.50px;letter-spacing:-0.284px;">No Issues</span>
<span class="t hid" style="left:1218.80px;top:876.50px;letter-spacing:0.119px;">4 hidden</span>
<span class="t mono red" style="left:56.70px;top:900.70px;letter-spacing:0.016px;">Uncaught ReferenceError: jQuery is not defined</span>
<span class="t mono red" style="left:73.30px;top:914.50px;letter-spacing:0.398px;">at</span>
<span class="t mono lnk" style="left:92.90px;top:914.50px;letter-spacing:0.031px;">bootstrap-sortable.js:209</span>
<span class="t mono lnk" style="left:1106.60px;top:900.70px;letter-spacing:0.031px;">bootstrap-sortable.js:209</span>
<span class="t tr" style="right:609.20px;top:287.45px;text-align:right">m</span>
<span class="t tr" style="right:602.45px;top:303.45px;text-align:right">t</span>
<span class="t tr" style="right:603.20px;top:319.45px;text-align:right">f</span>
<span class="t tr" style="right:600.70px;top:335.45px;text-align:right">g</span>
<span class="t tr" style="right:600.70px;top:351.45px;text-align:right">g</span>
<span class="t tr" style="right:599.20px;top:367.45px;text-align:right">/</span>
<span class="t tr" style="right:599.20px;top:383.45px;text-align:right">/</span>
<span class="t tr" style="right:602.95px;top:399.45px;text-align:right">t</span>
<span class="t tr" style="right:602.95px;top:415.45px;text-align:right">t</span>
<span class="t tr" style="right:602.95px;top:431.45px;text-align:right">t</span>
<span class="t tr" style="right:602.95px;top:447.45px;text-align:right">t</span>
<span class="t tr" style="right:606.70px;top:463.45px;text-align:right">a</span>
<span class="t tr" style="right:606.70px;top:479.45px;text-align:right">u</span>
<span class="t tr" style="right:608.20px;top:495.45px;text-align:right">u</span>
<span class="t tr" style="right:606.95px;top:511.45px;text-align:right">v</span>
<span class="t tr" style="right:608.20px;top:527.45px;text-align:right">o</span>
<span class="t tr" style="right:605.70px;top:543.45px;text-align:right">=</span>
<span class="t tr" style="right:608.20px;top:559.45px;text-align:right">o</span>
<span class="t tr" style="right:607.70px;top:575.45px;text-align:right">3</span>
<span class="t tr" style="right:608.20px;top:591.45px;text-align:right">o</span>
<span class="t tr" style="right:602.45px;top:607.45px;text-align:right">o</span>
<span class="t tr" style="right:604.20px;top:623.45px;text-align:right">r</span>
<span class="t tr" style="right:603.70px;top:639.45px;text-align:right">r</span>
<span class="t tr" style="right:603.70px;top:655.45px;text-align:right">r</span>
<span class="t tr" style="right:599.20px;top:671.45px;text-align:right">/</span>
<span class="t tr" style="right:599.20px;top:687.45px;text-align:right">/</span>
<span class="t tr" style="right:599.20px;top:703.45px;text-align:right">/</span>
<span class="t tr" style="right:599.20px;top:719.45px;text-align:right">/</span>
<div class="a" style="left:1298px;top:2px;width:3px;height:80px;background:#fff;"></div>
<div class="a" style="left:1299px;top:20px;width:1px;height:62px;background:#cfcfcf;"></div>
<div class="a" style="left:1298.7px;top:2px;width:2.3px;height:18px;background:#7c7c7c;"></div>
<svg class="a" style="left:0;top:0" width="1301" height="979" viewBox="0 0 1301 979">
<path fill="#fff" d="M500 271 L555 271 L555 279.5 L641 279.5 L641 271 L680.3 271 L680.3 287 L692.3 287 L692.3 303 L697 303 L697 319 L697.5 319 L697.5 335 L700 335 L700 399 L698.1 399 L698.1 447 L697 447 L697 463 L694 463 L694 495 L690.8 495 L690.8 559 L692 559 L692 575 L693.4 575 L693.4 591 L692 591 L692 607 L693.8 607 L693.8 623 L696.6 623 L696.6 655 L698 655 L698 671 L700 671 L700 736 L500 736 Z"/>
</svg>
<span class="t tr" style="left:514px;top:655.2px;width:2.6px;overflow:hidden">h</span>
<div class="a" style="left:504px;top:389px;width:1.3px;height:1.3px;background:#a8a8a8;"></div>
<div class="a" style="left:450px;top:111px;width:17px;height:704px;background:#f1f1f1"></div>
<div class="a" style="left:452px;top:128px;width:13px;height:607px;background:#c1c1c1;"></div>
<svg class="a" style="left:454px;top:117px" width="9" height="6" viewBox="0 0 9 6"><path d="M0.8 5L4.5 0.8L8.2 5z" fill="#a3a3a3"/></svg>
<svg class="a" style="left:454px;top:803px" width="9" height="6" viewBox="0 0 9 6"><path d="M0.5 0.8L4.5 5.2L8.5 0.8z" fill="#505050"/></svg>
<svg class="a" style="left:0;top:0" width="1301" height="979" viewBox="0 0 1301 979" fill="none" stroke="#ff0000" stroke-width="2.2" stroke-linecap="round" stroke-linejoin="round">
<path d="M490.8 153.8 C492.3 153.8 496.8 153.8 500.0 153.7 C503.2 153.6 505.8 153.6 510.0 153.5 C514.2 153.4 520.0 153.4 525.0 153.2 C530.0 153.0 533.4 153.3 540.0 152.3 C546.6 151.3 556.4 148.7 564.6 147.4 C572.8 146.1 579.0 145.6 589.2 144.7 C599.4 143.8 613.7 142.5 626.0 141.8 C638.3 141.1 650.7 140.9 663.0 140.6 C675.3 140.2 687.7 139.8 700.0 139.7 C712.3 139.5 724.7 139.4 737.0 139.7 C749.3 139.9 761.5 140.6 773.8 141.2 C786.1 141.8 800.5 142.8 810.7 143.4 C821.0 144.1 827.1 144.6 835.3 145.1 C843.5 145.6 849.7 146.1 860.0 146.5 C870.3 146.9 884.7 147.0 897.0 147.3 C909.3 147.6 923.6 147.8 933.8 148.5 C944.0 149.2 951.2 150.4 958.4 151.6 C965.6 152.8 971.2 154.5 976.9 155.9 C982.6 157.3 988.5 159.2 992.8 160.2 C997.1 161.1 1000.7 161.0 1002.7 161.6 C1004.7 162.2 1004.2 162.5 1004.8 163.5 C1005.4 164.5 1006.2 166.2 1006.2 167.6 C1006.2 169.0 1005.7 170.5 1004.5 171.9 C1003.3 173.3 1001.6 175.0 999.0 176.2 C996.4 177.4 993.7 178.5 989.0 179.3 C984.3 180.1 977.9 180.7 970.7 181.1 C963.5 181.5 954.2 181.5 946.0 181.5 C937.8 181.5 929.7 181.1 921.5 181.1 C913.3 181.1 904.2 181.3 897.0 181.5 C889.8 181.7 884.7 181.8 878.5 182.4 C872.3 183.0 867.2 184.3 860.0 185.2 C852.8 186.1 843.5 187.4 835.3 187.9 C827.1 188.4 821.0 188.3 810.7 188.1 C800.5 187.8 786.1 186.8 773.8 186.4 C761.5 186.0 749.3 185.7 737.0 185.7 C724.7 185.7 708.2 186.1 700.0 186.3 C691.8 186.5 692.8 186.8 687.6 186.7 C682.4 186.6 675.1 186.5 669.0 186.0 C662.9 185.5 657.9 184.8 650.7 183.7 C643.5 182.6 634.2 180.8 626.0 179.4 C617.8 178.0 609.7 176.3 601.5 175.0 C593.3 173.7 585.2 172.6 577.0 171.4 C568.8 170.2 557.7 168.4 552.0 167.7 C546.3 166.9 546.7 167.0 543.0 166.9 C539.3 166.8 534.5 167.2 530.0 167.3 C525.5 167.4 519.0 167.5 516.0 167.4 C513.0 167.3 512.9 167.2 511.8 166.6 C510.7 165.9 510.3 164.8 509.6 163.5 C508.9 162.2 508.2 160.2 507.5 159.0 C506.8 157.8 506.1 156.8 505.6 156.0 C505.1 155.2 504.7 154.6 504.5 154.3"/>
<path d="M237.0 963.5 C234.7 963.4 228.4 963.1 223.0 962.6 C217.6 962.1 210.8 961.0 204.6 960.5 C198.4 960.0 193.2 959.5 186.0 959.3 C178.8 959.1 168.7 959.2 161.5 959.5 C154.3 959.8 148.2 960.2 143.0 961.0 C137.8 961.8 134.1 963.0 130.0 964.0 C125.9 965.0 122.5 966.2 118.5 967.0 C114.5 967.8 110.3 968.4 105.8 969.0 C101.3 969.6 96.1 970.3 91.3 970.6 C86.5 970.9 82.2 971.1 76.9 970.9 C71.6 970.7 64.7 970.3 59.6 969.6 C54.5 968.9 50.5 967.8 46.2 966.7 C41.9 965.6 37.4 964.5 33.7 962.9 C30.0 961.3 27.1 959.4 24.0 957.1 C20.9 954.9 17.8 952.0 15.4 949.4 C13.0 946.8 11.2 944.4 9.6 941.7 C8.0 939.0 6.9 936.0 5.8 933.0 C4.7 930.0 3.6 926.9 2.9 923.5 C2.2 920.1 1.7 915.9 1.7 912.9 C1.7 909.9 1.9 907.5 2.9 905.7 C3.9 903.9 5.0 903.3 7.7 902.3 C10.4 901.3 14.9 900.9 19.2 899.9 C23.5 898.9 28.9 897.9 33.7 896.5 C38.5 895.1 43.2 892.6 48.0 891.3 C52.8 889.9 57.2 889.4 62.5 888.4 C67.8 887.4 75.0 886.4 80.0 885.2 C85.0 884.1 88.2 882.6 92.3 881.5 C96.4 880.4 99.5 879.5 104.6 878.5 C109.7 877.5 116.8 876.3 123.0 875.4 C129.2 874.5 134.3 873.7 141.5 872.9 C148.7 872.1 157.8 871.2 166.0 870.5 C174.2 869.8 182.5 869.2 190.7 868.9 C198.9 868.5 207.1 868.4 215.3 868.4 C223.5 868.4 232.7 868.5 240.0 868.7 C247.3 868.9 252.8 869.2 259.2 869.5 C265.6 869.8 272.1 869.7 278.5 870.2 C284.9 870.7 291.6 871.2 297.7 872.6 C303.8 874.0 311.0 877.6 315.0 878.8 C319.0 880.0 319.0 878.8 321.7 879.8 C324.4 880.8 328.1 882.9 331.3 884.6 C334.5 886.3 338.1 887.7 341.0 889.9 C343.9 892.1 346.5 895.0 348.7 897.6 C350.9 900.2 353.1 902.7 354.4 905.3 C355.7 907.9 356.1 910.6 356.3 913.0 C356.5 915.4 356.0 917.8 355.4 919.7 C354.8 921.6 353.8 922.9 352.5 924.5 C351.2 926.1 350.4 927.6 347.7 929.3 C345.0 931.0 340.5 933.0 336.2 934.6 C331.9 936.2 327.3 937.4 321.7 938.9 C316.1 940.4 309.7 942.2 302.5 943.7 C295.3 945.2 285.7 947.0 278.5 948.1 C271.3 949.2 265.4 949.9 259.2 950.5 C253.0 951.1 247.5 951.1 241.5 951.5 C235.5 951.9 230.2 952.5 223.0 952.8 C215.8 953.1 208.7 953.0 198.4 953.4 C188.2 953.8 173.2 954.6 161.5 955.0 C149.8 955.4 133.8 955.7 128.3 955.8"/>
</svg>
</body></html>
